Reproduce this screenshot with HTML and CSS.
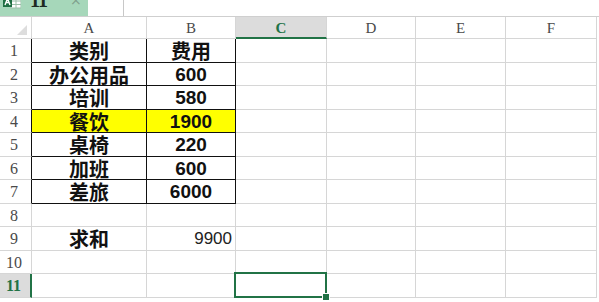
FILE: index.html
```html
<!DOCTYPE html>
<html lang="zh">
<head>
<meta charset="utf-8">
<title>Sheet</title>
<link rel="stylesheet" href="styles.css">
</head>
<body>
<div class="app">
  <div class="topbar">
    <div class="namebox">
      <svg class="xl" width="18" height="12" viewBox="0 0 18 12">
        <rect x="8" y="0" width="10" height="11" fill="#fff" stroke="#9bbfa9" stroke-width="1"/>
        <line x1="8" y1="4" x2="18" y2="4" stroke="#9bbfa9"/>
        <line x1="8" y1="7.5" x2="18" y2="7.5" stroke="#9bbfa9"/>
        <line x1="13" y1="0" x2="13" y2="11" stroke="#9bbfa9"/>
        <rect x="0" y="0" width="9" height="10" fill="#1f6f43"/>
        <path d="M2 8 L4.5 1.5 L7 8 M3 5.5 H6" stroke="#fff" stroke-width="1.4" fill="none"/>
      </svg>
      <span class="nb-text">11</span>
      <span class="nb-caret">ˇ</span>
      <span class="nb-x">×</span>
    </div>
    <div class="fx-btn"></div>
    <div class="formula"></div>
  </div>

  <div class="sheet">
    <div class="c corner"></div>
    <div class="c ch">A</div>
    <div class="c ch">B</div>
    <div class="c ch ch-sel">C</div>
    <div class="c ch">D</div>
    <div class="c ch">E</div>
    <div class="c ch">F</div>

    <div class="c rh rh-b">1</div>
    <div class="c b zh">类别</div>
    <div class="c b zh">费用</div>
    <div class="c"></div><div class="c"></div><div class="c"></div><div class="c"></div>

    <div class="c rh rh-b">2</div>
    <div class="c b zh">办公用品</div>
    <div class="c b num">600</div>
    <div class="c"></div><div class="c"></div><div class="c"></div><div class="c"></div>

    <div class="c rh rh-b">3</div>
    <div class="c b zh">培训</div>
    <div class="c b num">580</div>
    <div class="c"></div><div class="c"></div><div class="c"></div><div class="c"></div>

    <div class="c rh rh-b">4</div>
    <div class="c b zh hl">餐饮</div>
    <div class="c b num hl">1900</div>
    <div class="c"></div><div class="c"></div><div class="c"></div><div class="c"></div>

    <div class="c rh rh-b">5</div>
    <div class="c b zh">桌椅</div>
    <div class="c b num">220</div>
    <div class="c"></div><div class="c"></div><div class="c"></div><div class="c"></div>

    <div class="c rh rh-b">6</div>
    <div class="c b zh">加班</div>
    <div class="c b num">600</div>
    <div class="c"></div><div class="c"></div><div class="c"></div><div class="c"></div>

    <div class="c rh rh-b">7</div>
    <div class="c b zh">差旅</div>
    <div class="c b num">6000</div>
    <div class="c"></div><div class="c"></div><div class="c"></div><div class="c"></div>

    <div class="c rh">8</div>
    <div class="c"></div><div class="c"></div>
    <div class="c"></div><div class="c"></div><div class="c"></div><div class="c"></div>

    <div class="c rh">9</div>
    <div class="c zh">求和</div>
    <div class="c sum">9900</div>
    <div class="c"></div><div class="c"></div><div class="c"></div><div class="c"></div>

    <div class="c rh">10</div>
    <div class="c"></div><div class="c"></div>
    <div class="c"></div><div class="c"></div><div class="c"></div><div class="c"></div>

    <div class="c rh rh-sel">11</div>
    <div class="c"></div><div class="c"></div>
    <div class="c active"><span class="sel"><span class="handle"></span></span></div>
    <div class="c"></div><div class="c"></div><div class="c"></div>
  </div>
</div>
</body>
</html>
```

FILE: styles.css
```css
html, body {
  margin: 0;
  padding: 0;
  background: #fff;
  overflow: hidden;
}

.app {
  width: 599px;
  height: 302px;
  overflow: hidden;
}

/* ---------- top bar ---------- */
.topbar {
  display: flex;
  height: 16px;
  border-bottom: 1px solid #cfcfcf;
  overflow: hidden;
}

.namebox {
  width: 88px;
  background: #a6d7ba;
  display: flex;
  align-items: flex-start;
  overflow: hidden;
}

.xl {
  margin: -3px 0 0 3px;
  flex: none;
}

.nb-text {
  display: block;
  font-family: "Liberation Serif", serif;
  font-weight: 700;
  font-size: 20px;
  line-height: 20px;
  margin: -10px 0 0 9px;
  color: #1d2a22;
  letter-spacing: -1px;
}

.nb-caret {
  display: block;
  font-family: "DejaVu Sans", sans-serif;
  font-size: 10px;
  line-height: 10px;
  margin: -4px 0 0 6px;
  color: #6e8c7a;
}

.nb-x {
  display: block;
  font-family: "DejaVu Sans", sans-serif;
  font-size: 14px;
  line-height: 14px;
  margin: -7px 0 0 12px;
  color: #7fa08c;
}

.fx-btn {
  width: 35px;
  border-right: 1px solid #c8c8c8;
}

.formula {
  flex: 1;
}

/* ---------- grid ---------- */
.sheet {
  display: grid;
  grid-template-columns: 32px 115px 89px 91px 89px 90px 91px;
  grid-template-rows: 22px repeat(11, 23.5px);
}

.c {
  box-sizing: border-box;
  border-right: 1px solid #d6d6d6;
  border-bottom: 1px solid #d6d6d6;
  display: flex;
  align-items: center;
  justify-content: center;
  overflow: visible;
  white-space: nowrap;
}

.corner {
  align-items: flex-end;
  justify-content: flex-end;
  padding: 0 4px 3px 0;
}

.corner::after {
  content: "";
  width: 0;
  height: 0;
  border-left: 10px solid transparent;
  border-bottom: 10px solid #dddddd;
}

.ch {
  font-family: "Liberation Serif", serif;
  font-size: 15px;
  color: #4a4a4a;
  padding-top: 2px;
}

.ch-sel {
  background: #dcdcdc;
  color: #217346;
  font-weight: 700;
  border-bottom: 2px solid #217346;
}

.rh {
  font-family: "Liberation Serif", serif;
  font-size: 16px;
  color: #4a4a4a;
  padding: 2px 3px 0 0;
}

.rh-b {
  border-right-color: #111;
}

.rh-sel {
  background: #dcdcdc;
  color: #217346;
  font-weight: 700;
  border-right: 2px solid #217346;
}

.b {
  border-right-color: #111;
  border-bottom-color: #111;
}

.hl {
  background: #ffff00;
}

.zh {
  font-family: "Noto Sans CJK SC", "Noto Sans CJK JP", sans-serif;
  font-weight: 700;
  font-size: 20px;
  line-height: 18px;
  color: #111;
  padding-top: 2px;
}

.num {
  font-family: "Liberation Sans", Arial, sans-serif;
  font-weight: 700;
  font-size: 19px;
  line-height: 18px;
  color: #111;
  padding-top: 2px;
}

.sum {
  font-family: "Liberation Sans", Arial, sans-serif;
  font-size: 17px;
  line-height: 18px;
  color: #222;
  justify-content: flex-end;
  padding: 2px 3px 0 0;
}

.active {
  position: relative;
}

.sel {
  position: absolute;
  left: -2px;
  top: -2px;
  right: -1px;
  bottom: -1px;
  border: 2px solid #217346;
}

.handle {
  position: absolute;
  right: -5px;
  bottom: -5px;
  width: 6px;
  height: 6px;
  background: #217346;
  border: 1px solid #fff;
}
```
